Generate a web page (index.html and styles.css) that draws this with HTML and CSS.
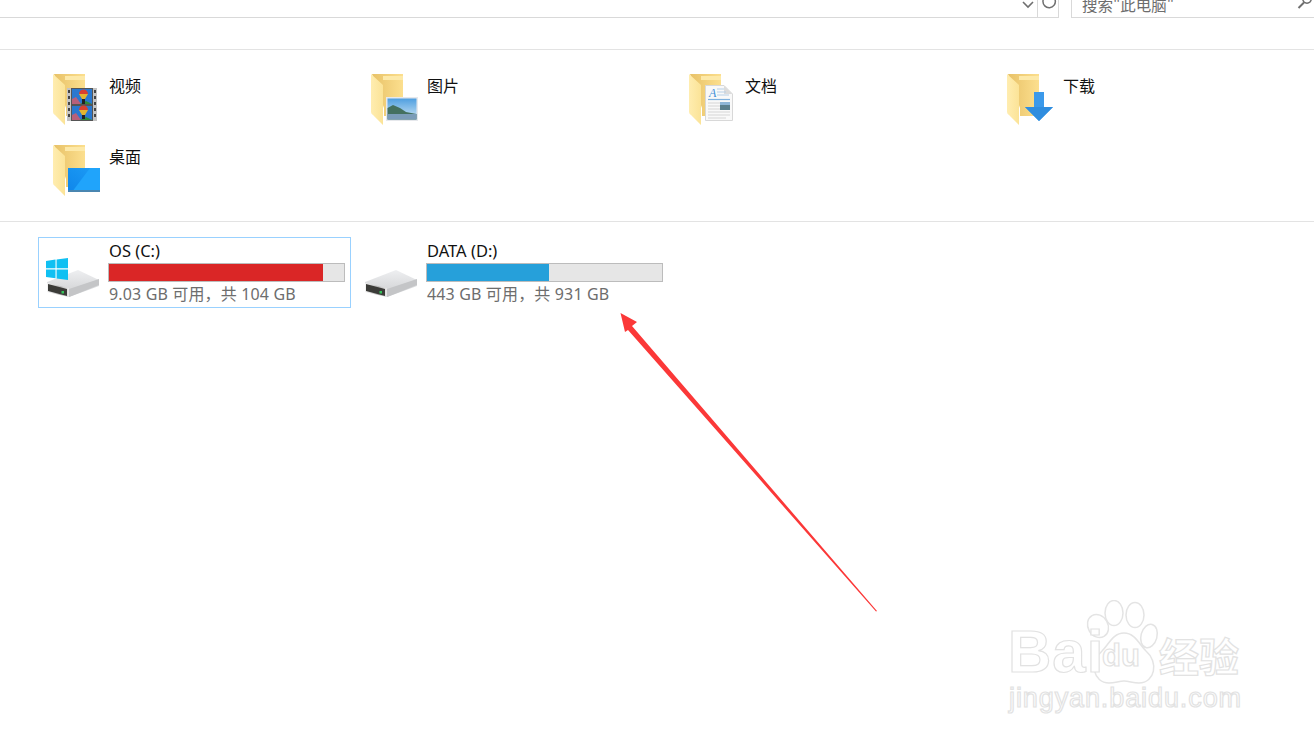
FILE: index.html
```html
<!DOCTYPE html>
<html lang="zh-CN">
<head>
<meta charset="utf-8">
<title>此电脑</title>
<link rel="stylesheet" href="styles.css">
</head>
<body>
<svg class="defs" width="0" height="0" aria-hidden="true">
  <defs>
    <linearGradient id="back" x1="0" x2="1" y1="0" y2="0"><stop offset="0" stop-color="#e8c268"/><stop offset="1" stop-color="#fcdf8e"/></linearGradient>
    <linearGradient id="flap" x1="0" x2="1" y1="0" y2="0"><stop offset="0" stop-color="#ffedb0"/><stop offset="1" stop-color="#fbe397"/></linearGradient>
    <linearGradient id="disk" x1="0" x2="0" y1="0" y2="1"><stop offset="0" stop-color="#eeeff1"/><stop offset="1" stop-color="#cdced0"/></linearGradient>
    <linearGradient id="front" x1="0" x2="1" y1="0" y2="0"><stop offset="0" stop-color="#f5f5f5"/><stop offset=".6" stop-color="#b9b9b9"/><stop offset="1" stop-color="#e8e8e8"/></linearGradient>
    <linearGradient id="desk" x1="0" x2="1" y1="1" y2="0"><stop offset="0" stop-color="#0f86ea"/><stop offset="1" stop-color="#1d9df6"/></linearGradient>
    <linearGradient id="sky" x1="0" x2="0" y1="0" y2="1"><stop offset="0" stop-color="#4f9fe0"/><stop offset="1" stop-color="#cfe6f5"/></linearGradient>
    <symbol id="folder" viewBox="0 0 48 53">
      <path d="M1 2H32V44H13V36Z" fill="url(#back)"/>
      <path d="M1 2H32V4H12V8H32V2Z" fill="#fde9a8"/>
      <path d="M0 2 12 13V53L2 43Q0 42 0 40Z" fill="url(#flap)"/>
    </symbol>
    <symbol id="hdd" viewBox="0 0 54 29">
      <path d="M1 13 32 1 53 11V17L23 28 1 22Z" fill="url(#disk)"/>
      <path d="M23 20 53 10V16L23 28Z" fill="#c4c5c7"/>
      <path d="M1 14 23 19V28L1 23Z" fill="url(#front)"/>
      <path d="M2 15 21 20V27L2 22Z" fill="#3b3b38"/>
      <rect x="15.500" y="22" width="2.500" height="2.500" fill="#35c45a"/>
    </symbol>
  </defs>
</svg>

<header class="toolbar">
  <div class="address">
    <svg class="chev" width="14" height="10" viewBox="0 0 14 10"><path d="M2 2 7 7 12 2" fill="none" stroke="#6f6f6f" stroke-width="1.600"/></svg>
    <div class="refresh">
      <svg width="18" height="18" viewBox="0 0 18 18"><path d="M5.500 0.500A6.200 6.200 0 1 0 12 0" fill="none" stroke="#6f6f6f" stroke-width="1.500"/></svg>
    </div>
  </div>
  <div class="search">
    <span class="search-text">搜索"此电脑"</span>
    <svg width="16" height="16" viewBox="0 0 16 16"><circle cx="10" cy="4" r="4.200" fill="none" stroke="#6f6f6f" stroke-width="1.500"/><path d="M7 7.500 1.500 13" stroke="#6f6f6f" stroke-width="2"/></svg>
  </div>
</header>

<main>
  <section class="folders">
    <div class="folder">
      <div class="ficon">
        <svg class="fbase" width="48" height="53"><use href="#folder"/></svg>
        <svg class="badge badge-video" width="30" height="33" viewBox="0 0 30 33">
          <rect width="30" height="33" fill="#555"/>
          <rect width="4" height="33" fill="#c4c4c4"/><rect x="26" width="4" height="33" fill="#c4c4c4"/>
          <path d="M1 2h2v3H1zM1 8h2v3H1zM1 14h2v3H1zM1 20h2v3H1zM1 26h2v3H1zM27 2h2v3h-2zM27 8h2v3h-2zM27 14h2v3h-2zM27 20h2v3h-2zM27 26h2v3h-2z" fill="#444"/>
          <rect x="5" y="1" width="20" height="15" fill="#2a78cf"/><rect x="5" y="18" width="20" height="14" fill="#2a78cf"/>
          <path d="M5 16V11L9 9 14 16ZM5 32V27L9 25 14 32Z" fill="#b8607a"/>
          <path d="M13 16 19 13 25 16ZM13 32 19 29 25 32Z" fill="#2e8b3a"/>
          <path d="M12 6a4.500 4.500 0 0 1 9 0Z" fill="#d9402f"/><path d="M12 6h9L18 11h-3Z" fill="#e3b52f"/>
          <path d="M12 22a4.500 4.500 0 0 1 9 0Z" fill="#d9402f"/><path d="M12 22h9L18 27h-3Z" fill="#e3b52f"/>
          <path d="M15 11h3v5h-3zM15 27h3v4h-3z" fill="#222"/>
        </svg>
      </div>
      <span class="fname">视频</span>
    </div>
    <div class="folder">
      <div class="ficon">
        <svg class="fbase" width="48" height="53"><use href="#folder"/></svg>
        <svg class="badge badge-pic" width="32" height="24" viewBox="0 0 32 24">
          <rect width="32" height="24" fill="#e6e8ec"/>
          <rect x="1.500" y="1.500" width="29" height="21" fill="url(#sky)"/>
          <path d="M1.500 11 7 8 14 11 20 15 30.500 17V22.500H1.500Z" fill="#44705f"/>
          <path d="M1.500 17H30.500V22.500H1.500Z" fill="#7b9cb8"/>
        </svg>
      </div>
      <span class="fname">图片</span>
    </div>
    <div class="folder">
      <div class="ficon">
        <svg class="fbase" width="48" height="53"><use href="#folder"/></svg>
        <svg class="badge badge-doc" width="28" height="36" viewBox="0 0 28 36">
          <path d="M0.500 0.500H19L27.500 9V35.500H0.500Z" fill="#f9f9f9" stroke="#d8d8d8"/>
          <path d="M19 0.500V9H27.500Z" fill="#dcdcdc"/>
          <text class="doc-a" x="4" y="12">A</text>
          <path d="M12 4h7M12 7h9M12 10h12" stroke="#b6cfe6"/>
          <path d="M3 14.500H25" stroke="#7fb2e0" stroke-width="1.200"/>
          <path d="M3 18h12M3 21h12M3 24h12M3 27h22M3 30h22M3 33h18" stroke="#d5d5d5"/>
          <rect x="15" y="17" width="10" height="8" fill="#5b7f8c"/><rect x="15" y="17" width="10" height="3" fill="#8fb6d6"/>
        </svg>
      </div>
      <span class="fname">文档</span>
    </div>
    <div class="folder">
      <div class="ficon">
        <svg class="fbase" width="48" height="53"><use href="#folder"/></svg>
        <svg class="badge badge-down" width="28" height="29" viewBox="0 0 28 29">
          <path d="M9 0H19V15H28L14 29 0 15H9Z" fill="#3b99ea"/>
          <path d="M0 15H28L14 29Z" fill="#2f8ddf"/>
        </svg>
      </div>
      <span class="fname">下载</span>
    </div>
    <div class="folder">
      <div class="ficon">
        <svg class="fbase" width="48" height="53"><use href="#folder"/></svg>
        <svg class="badge badge-desk" width="32" height="24" viewBox="0 0 32 24">
          <rect width="32" height="24" fill="url(#desk)"/>
          <path d="M4 24 22 0H32V24Z" fill="#20a4fb"/>
          <rect y="22" width="32" height="2" fill="#4a86b0"/>
        </svg>
      </div>
      <span class="fname">桌面</span>
    </div>
  </section>

  <section class="drives">
    <div class="drive selected">
      <div class="dicon">
        <svg class="hdd" width="54" height="29"><use href="#hdd"/></svg>
        <svg class="win" width="22" height="22" viewBox="0 0 22 22">
          <path d="M0 3 9.500 1.600V10.300H0ZM10.600 1.400 22 0V10.300H10.600ZM0 11.500H9.500V20.200L0 19ZM10.600 11.500H22V22L10.600 20.400Z" fill="#10c0f2"/>
        </svg>
      </div>
      <div class="dinfo">
        <div class="dname">OS (C:)</div>
        <div class="bar"><div class="fill fill-red" style="width:91%"></div></div>
        <div class="dsize">9.03 GB 可用，共 104 GB</div>
      </div>
    </div>
    <div class="drive">
      <div class="dicon">
        <svg class="hdd" width="54" height="29"><use href="#hdd"/></svg>
      </div>
      <div class="dinfo">
        <div class="dname">DATA (D:)</div>
        <div class="bar"><div class="fill fill-blue" style="width:51.800%"></div></div>
        <div class="dsize">443 GB 可用，共 931 GB</div>
      </div>
    </div>
  </section>
</main>

<svg class="arrow" width="270" height="310" viewBox="615 308 270 310" aria-hidden="true">
  <path d="M620.500 313 637 322 632 326 877 611 876 611.500 628 330 625 332Z" fill="#fb3838"/>
</svg>

<div class="watermark" aria-hidden="true">
  <svg class="paw" width="90" height="90" viewBox="0 0 90 90">
    <g fill="#fff" stroke="#e4e4e4" stroke-width="1.500">
      <ellipse cx="15" cy="26" rx="10" ry="12" transform="rotate(-30 15 26)"/>
      <ellipse cx="31" cy="13" rx="9" ry="12.500"/>
      <ellipse cx="52" cy="15" rx="9" ry="12.500"/>
      <ellipse cx="66" cy="36" rx="8" ry="12" transform="rotate(15 66 36)"/>
      <path d="M41 33C30 33 26 44 19 51 6 62 10 83 26 83 32 83 36 81 41 81 46 81 50 83 56 83 72 83 76 62 63 51 56 44 52 33 41 33Z"/>
    </g>
  </svg>
  <span class="wm-bai">Bai</span>
  <span class="wm-du">du</span>
  <span class="wm-jy">经验</span>
  <span class="wm-url">jingyan.baidu.com</span>
</div>
</body>
</html>
```

FILE: styles.css
```css
* { box-sizing: border-box; }
html, body { margin: 0; height: 100%; }
body {
  position: relative;
  overflow: hidden;
  background: #fff;
  color: #111;
  font-family: "Noto Sans", "Noto Sans CJK SC", sans-serif;
  font-size: 15px;
}
.defs { position: absolute; }

.toolbar {
  display: flex;
  gap: 12px;
  height: 18px;
  overflow: hidden;
}
.address {
  display: flex;
  justify-content: flex-end;
  width: 1059px;
  border-bottom: 1px solid #d9d9d9;
  border-right: 1px solid #d9d9d9;
}
.chev { margin: 0 2px 0 0; }
.refresh {
  width: 21px;
  border-left: 1px solid #d9d9d9;
  padding: 0 0 0 2px;
  margin: 0;
}
.refresh svg { display: block; margin-top: -4px; }
.search {
  flex: 1;
  display: flex;
  justify-content: space-between;
  border-left: 1px solid #d9d9d9;
  border-bottom: 1px solid #d9d9d9;
  padding: 0 1px 0 10px;
}
.search svg { margin-top: -5px; }
.search-text {
  color: #6d6d6d;
  font-family: "Noto Sans CJK SC", sans-serif;
  font-size: 15.500px;
  line-height: 18px;
  margin-top: -5px;
}

.folders {
  display: grid;
  grid-template-columns: repeat(4, 318px);
  grid-auto-rows: 71px;
  margin-top: 31px;
  padding: 22px 0 0 53px;
  height: 173px;
  border-top: 1px solid #e3e3e3;
  border-bottom: 1px solid #e3e3e3;
}
.folder { display: flex; gap: 8px; }
.ficon { position: relative; width: 48px; height: 53px; flex: none; }
.fbase { display: block; }
.fname {
  font-family: "Noto Sans CJK SC", sans-serif;
  font-size: 16px;
  line-height: 24px;
  margin-top: 1px;
}
.badge { position: absolute; }
.badge-video { left: 14px; top: 16px; }
.badge-pic { left: 15px; top: 25px; }
.badge-doc { left: 16px; top: 13px; }
.badge-down { left: 18px; top: 20px; }
.badge-desk { left: 15px; top: 25px; }
.doc-a { font-family: "Liberation Serif", serif; font-style: italic; font-size: 12px; fill: #3f8fd8; }

.drives {
  display: grid;
  grid-template-columns: repeat(2, 318px);
  padding: 15px 0 0 38px;
}
.drive {
  display: flex;
  width: 313px;
  height: 71px;
  border: 1px solid transparent;
  padding-left: 7px;
  gap: 8px;
}
.drive.selected { border-color: #99d1ff; }
.dicon { position: relative; width: 54px; flex: none; }
.hdd { position: absolute; left: 0; top: 31px; }
.win { position: absolute; left: 0; top: 20px; }
.dinfo { width: 237px; padding-top: 2px; flex: none; }
.dname {
  font-size: 16.500px;
  line-height: 22px;
  height: 23px;
  padding-left: 1px;
}
.bar {
  height: 19px;
  background: #e6e6e6;
  border: 1px solid #bcbcbc;
}
.fill { height: 100%; }
.fill-red { background: #da2626; }
.fill-blue { background: #26a0da; }
.dsize {
  color: #6d6d6d;
  font-size: 16px;
  letter-spacing: 0.150px;
  line-height: 20px;
  margin-top: 2px;
  padding-left: 1px;
  white-space: nowrap;
}

.arrow { position: absolute; left: 615px; top: 308px; }

.watermark { position: absolute; left: 1000px; top: 595px; width: 260px; height: 130px; }
.paw { position: absolute; left: 83px; top: 5px; }
.watermark span {
  position: absolute;
  color: #fff;
  -webkit-text-stroke: 1.200px #e2e2e2;
  white-space: nowrap;
}
.wm-bai { left: 8px; top: 22px; font: 700 60px/70px "Liberation Sans", sans-serif; letter-spacing: 1px; }
.wm-du { left: 102px; top: 44px; font: 700 31px/34px "Liberation Sans", sans-serif; }
.wm-jy { left: 159px; top: 35px; font: 700 40px/50px "Noto Sans CJK SC", sans-serif; }
.wm-url { left: 9px; top: 86px; font: 400 27px/34px "Liberation Sans", sans-serif; letter-spacing: 0.900px; }
```
